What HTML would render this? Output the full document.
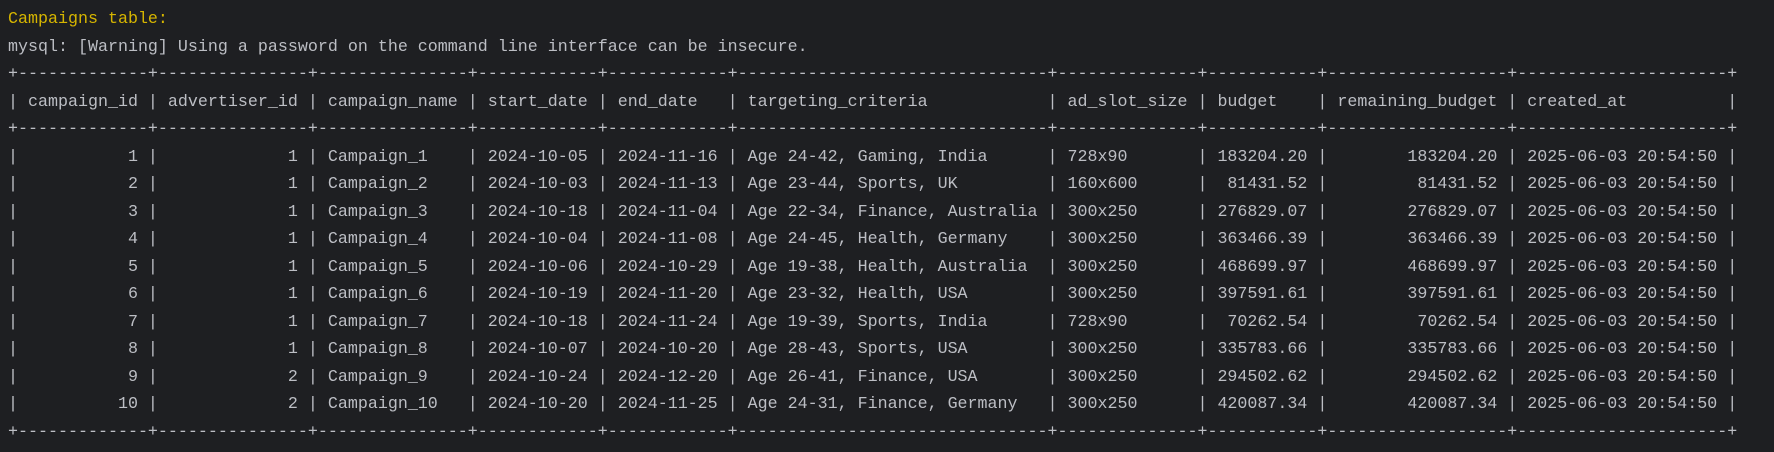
<!DOCTYPE html>
<html><head><meta charset="utf-8"><style>
html,body{margin:0;padding:0;background:#1e1f22;width:1774px;height:452px;overflow:hidden}
pre{margin:0;padding:6px 0 0 8px;font-family:"Liberation Mono",monospace;font-size:16.67px;line-height:27.5px;color:#bcbec4}
.y{color:#d6b500}
</style></head><body><pre><span class="y">Campaigns table:</span>
mysql: [Warning] Using a password on the command line interface can be insecure.
+-------------+---------------+---------------+------------+------------+-------------------------------+--------------+-----------+------------------+---------------------+
| campaign_id | advertiser_id | campaign_name | start_date | end_date   | targeting_criteria            | ad_slot_size | budget    | remaining_budget | created_at          |
+-------------+---------------+---------------+------------+------------+-------------------------------+--------------+-----------+------------------+---------------------+
|           1 |             1 | Campaign_1    | 2024-10-05 | 2024-11-16 | Age 24-42, Gaming, India      | 728x90       | 183204.20 |        183204.20 | 2025-06-03 20:54:50 |
|           2 |             1 | Campaign_2    | 2024-10-03 | 2024-11-13 | Age 23-44, Sports, UK         | 160x600      |  81431.52 |         81431.52 | 2025-06-03 20:54:50 |
|           3 |             1 | Campaign_3    | 2024-10-18 | 2024-11-04 | Age 22-34, Finance, Australia | 300x250      | 276829.07 |        276829.07 | 2025-06-03 20:54:50 |
|           4 |             1 | Campaign_4    | 2024-10-04 | 2024-11-08 | Age 24-45, Health, Germany    | 300x250      | 363466.39 |        363466.39 | 2025-06-03 20:54:50 |
|           5 |             1 | Campaign_5    | 2024-10-06 | 2024-10-29 | Age 19-38, Health, Australia  | 300x250      | 468699.97 |        468699.97 | 2025-06-03 20:54:50 |
|           6 |             1 | Campaign_6    | 2024-10-19 | 2024-11-20 | Age 23-32, Health, USA        | 300x250      | 397591.61 |        397591.61 | 2025-06-03 20:54:50 |
|           7 |             1 | Campaign_7    | 2024-10-18 | 2024-11-24 | Age 19-39, Sports, India      | 728x90       |  70262.54 |         70262.54 | 2025-06-03 20:54:50 |
|           8 |             1 | Campaign_8    | 2024-10-07 | 2024-10-20 | Age 28-43, Sports, USA        | 300x250      | 335783.66 |        335783.66 | 2025-06-03 20:54:50 |
|           9 |             2 | Campaign_9    | 2024-10-24 | 2024-12-20 | Age 26-41, Finance, USA       | 300x250      | 294502.62 |        294502.62 | 2025-06-03 20:54:50 |
|          10 |             2 | Campaign_10   | 2024-10-20 | 2024-11-25 | Age 24-31, Finance, Germany   | 300x250      | 420087.34 |        420087.34 | 2025-06-03 20:54:50 |
+-------------+---------------+---------------+------------+------------+-------------------------------+--------------+-----------+------------------+---------------------+</pre></body></html>
